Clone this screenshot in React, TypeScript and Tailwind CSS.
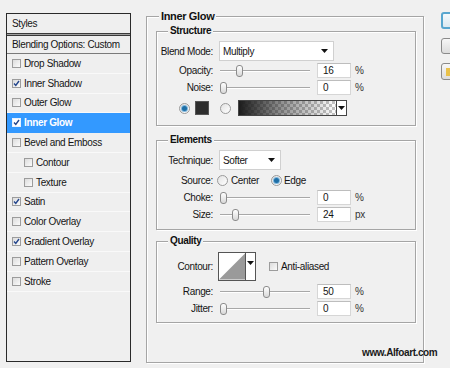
import React from "react"

type Item = { label: string; checked?: boolean; selected?: boolean; indent?: boolean }

const items: Item[] = [
  { label: "Drop Shadow" },
  { label: "Inner Shadow", checked: true },
  { label: "Outer Glow" },
  { label: "Inner Glow", checked: true, selected: true },
  { label: "Bevel and Emboss" },
  { label: "Contour", indent: true },
  { label: "Texture", indent: true },
  { label: "Satin", checked: true },
  { label: "Color Overlay" },
  { label: "Gradient Overlay", checked: true },
  { label: "Pattern Overlay" },
  { label: "Stroke" },
]

function Check({ on, white }: { on?: boolean; white?: boolean }) {
  return (
    <span
      className={`flex h-[9px] w-[9px] shrink-0 items-center justify-center border ${
        white ? "border-[#e8f2ff] bg-white" : "border-[#9c9c9c] bg-gradient-to-br from-[#dcdcdc] to-[#fbfbfb]"
      }`}
    >
      {on && (
        <svg width="7" height="7" viewBox="0 0 7 7">
          <path d="M1 3.5 L2.8 5.5 L6 1" fill="none" stroke="#23458c" strokeWidth="1.4" />
        </svg>
      )}
    </span>
  )
}

function Radio({ on }: { on?: boolean }) {
  return (
    <span className="flex h-[11px] w-[11px] shrink-0 items-center justify-center rounded-full border border-[#9a9a9a] bg-gradient-to-br from-[#e2e2e2] to-white">
      {on && <span className="h-[5px] w-[5px] rounded-full bg-[#1f6fa6] shadow-[0_0_0_1px_#7fb6dc]" />}
    </span>
  )
}

function Arrow() {
  return (
    <svg width="7" height="4" viewBox="0 0 7 4">
      <path d="M0 0 H7 L3.5 4 Z" fill="#111" />
    </svg>
  )
}

function Group({ title, big, className, children }: { title: string; big?: boolean; className: string; children?: React.ReactNode }) {
  return (
    <div className={`relative shrink-0 border border-[#a5a5a5] shadow-[inset_1px_1px_0_#fff,1px_1px_0_#fff] ${className}`}>
      <span
        className={`absolute -top-[8px] whitespace-nowrap bg-[#f0f0f0] px-[2px] font-bold leading-[14px] text-[#111] ${
          big ? "left-[12px] text-[11px]" : "left-[11px] text-[10px]"
        }`}
      >
        {title}
      </span>
      {children}
    </div>
  )
}

function Label({ text }: { text: string }) {
  return <span className="w-[56px] shrink-0 text-right">{text}</span>
}

function SliderRow({ label, value, unit, thumb }: { label: string; value: string; unit: string; thumb: number }) {
  return (
    <div className="flex h-[17px] items-center">
      <Label text={label} />
      <div className="relative ml-[7px] h-[12px] w-[90px]">
        <div className="absolute left-0 right-0 top-[5px] h-[2px] border-t border-[#a8a8a8] border-b border-b-white" />
        <div
          className="absolute top-0 h-[12px] w-[7px] rounded-[3px] border border-[#8c8c8c] bg-gradient-to-b from-white to-[#d8d8d8]"
          style={{ left: thumb }}
        />
      </div>
      <div className="ml-[7px] flex h-[15px] w-[34px] items-center border border-[#d6d6d6] border-t-[#bdbdbd] bg-white pl-[5px]">
        {value}
      </div>
      <span className="ml-[4px] text-[#333]">{unit}</span>
    </div>
  )
}

export default function App() {
  return (
    <div className="relative flex h-[368px] w-[450px] items-start overflow-hidden whitespace-nowrap bg-[#f0f0f0] font-['Liberation_Sans',Arial,sans-serif] text-[10px] tracking-[-0.35px] text-[#151515]">
      {/* styles list */}
      <div className="ml-[6px] mt-[13px] flex h-[349px] w-[125px] shrink-0 flex-col border border-[#2a2a2a] bg-[#efefef]">
        <div className="flex h-[19px] items-center pl-[5px]">Styles</div>
        <div className="h-[3px] border-y border-[#3a3a3a] bg-[#a0a0a0]" />
        <div className="flex h-[18px] items-center border-b border-[#7a7a7a] pl-[5px]">Blending Options: Custom</div>
        {items.map((it) => (
          <div
            key={it.label}
            className={`flex h-[19.8px] shrink-0 items-center gap-[3px] border-b ${
              it.indent ? "pl-[17px]" : "pl-[5px]"
            } ${it.selected ? "border-[#3399ff] bg-[#3399ff] font-bold text-white" : "border-[#f9f9f9]"}`}
          >
            <Check on={it.checked} white={it.selected} />
            <span>{it.label}</span>
          </div>
        ))}
      </div>

      {/* inner glow panel */}
      <Group title="Inner Glow" big className="ml-[15px] mt-[16px] h-[347px] w-[278px]">
        <div className="flex flex-col pl-[9px]">
          <Group title="Structure" className="mt-[14px] h-[95px] w-[260px]">
            <div className="flex flex-col pt-[9px]">
              <div className="flex h-[20px] items-center">
                <Label text="Blend Mode:" />
                <div className="ml-[6px] flex h-[20px] w-[115px] items-center justify-between border border-[#d0d0d0] bg-white pl-[3px] pr-[5px]">
                  <span>Multiply</span>
                  <Arrow />
                </div>
              </div>
              <div className="mt-[1px]">
                <SliderRow label="Opacity:" value="16" unit="%" thumb={16} />
                <SliderRow label="Noise:" value="0" unit="%" thumb={0} />
              </div>
              <div className="mt-[4px] flex h-[16px] items-center pl-[22px]">
                <Radio on />
                <span className="ml-[5px] h-[14px] w-[14px] border border-[#555] bg-[#2e2e2e]" />
                <span className="ml-[11px]">
                  <Radio />
                </span>
                <div className="ml-[7px] flex h-[16px] w-[109px] border border-[#444]">
                  <div className="flex-1 [background:linear-gradient(to_right,#1c1c1c,rgba(40,40,40,0.5)_45%,rgba(255,255,255,0)),repeating-conic-gradient(#c4c4c4_0_25%,#fff_0_50%)_0_0/6px_6px]" />
                  <div className="flex w-[10px] items-center justify-center border-l border-[#444] bg-white">
                    <Arrow />
                  </div>
                </div>
              </div>
            </div>
          </Group>

          <Group title="Elements" className="mt-[14px] h-[90px] w-[260px]">
            <div className="flex flex-col pt-[9px]">
              <div className="flex h-[20px] items-center">
                <Label text="Technique:" />
                <div className="ml-[6px] flex h-[20px] w-[62px] items-center justify-between border border-[#d0d0d0] bg-white pl-[3px] pr-[5px]">
                  <span>Softer</span>
                  <Arrow />
                </div>
              </div>
              <div className="mt-[3px] flex h-[14px] items-center">
                <Label text="Source:" />
                <span className="ml-[4px]">
                  <Radio />
                </span>
                <span className="ml-[3px]">Center</span>
                <span className="ml-[12px]">
                  <Radio on />
                </span>
                <span className="ml-[2px]">Edge</span>
              </div>
              <div className="mt-[2px]">
                <SliderRow label="Choke:" value="0" unit="%" thumb={0} />
                <SliderRow label="Size:" value="24" unit="px" thumb={12} />
              </div>
            </div>
          </Group>

          <Group title="Quality" className="mt-[11px] h-[82px] w-[260px]">
            <div className="flex flex-col pt-[10px]">
              <div className="flex h-[29px] items-center">
                <Label text="Contour:" />
                <div className="ml-[5px] flex h-[29px] w-[38px] border border-[#555] bg-white">
                  <svg width="27" height="27" viewBox="0 0 27 27" className="border-r border-[#555]">
                    <polygon points="0,27 27,0 27,27" fill="#9a9a9a" />
                  </svg>
                  <div className="flex flex-1 items-start justify-center pt-[8px]">
                    <Arrow />
                  </div>
                </div>
                <span className="ml-[13px]">
                  <Check />
                </span>
                <span className="ml-[3px]">Anti-aliased</span>
              </div>
              <div className="mt-[2px]">
                <SliderRow label="Range:" value="50" unit="%" thumb={43} />
                <SliderRow label="Jitter:" value="0" unit="%" thumb={0} />
              </div>
            </div>
          </Group>
        </div>
      </Group>

      {/* dialog buttons, cut off at the edge */}
      <div className="ml-[17px] mt-[12px] flex shrink-0 flex-col gap-[9px]">
        <div className="h-[17px] w-[40px] rounded-[3px] border-2 border-[#58a6cf] bg-gradient-to-b from-[#f4f9fc] to-[#dbe9f1]" />
        <div className="h-[16px] w-[40px] rounded-[3px] border border-[#8a8a8a] bg-gradient-to-b from-[#f7f7f7] to-[#dcdcdc]" />
        <div className="flex h-[17px] w-[40px] items-center rounded-[3px] border border-[#8a8a8a] bg-gradient-to-b from-[#f7f7f7] to-[#dcdcdc] pl-[4px]">
          <span className="h-[8px] w-[4px] bg-[#e9c14a]" />
        </div>
      </div>

      <span className="absolute left-[362px] top-[345px] text-[10px] font-bold tracking-[-0.4px] text-[#1a1a1a]">
        www.Alfoart.com
      </span>
    </div>
  )
}
